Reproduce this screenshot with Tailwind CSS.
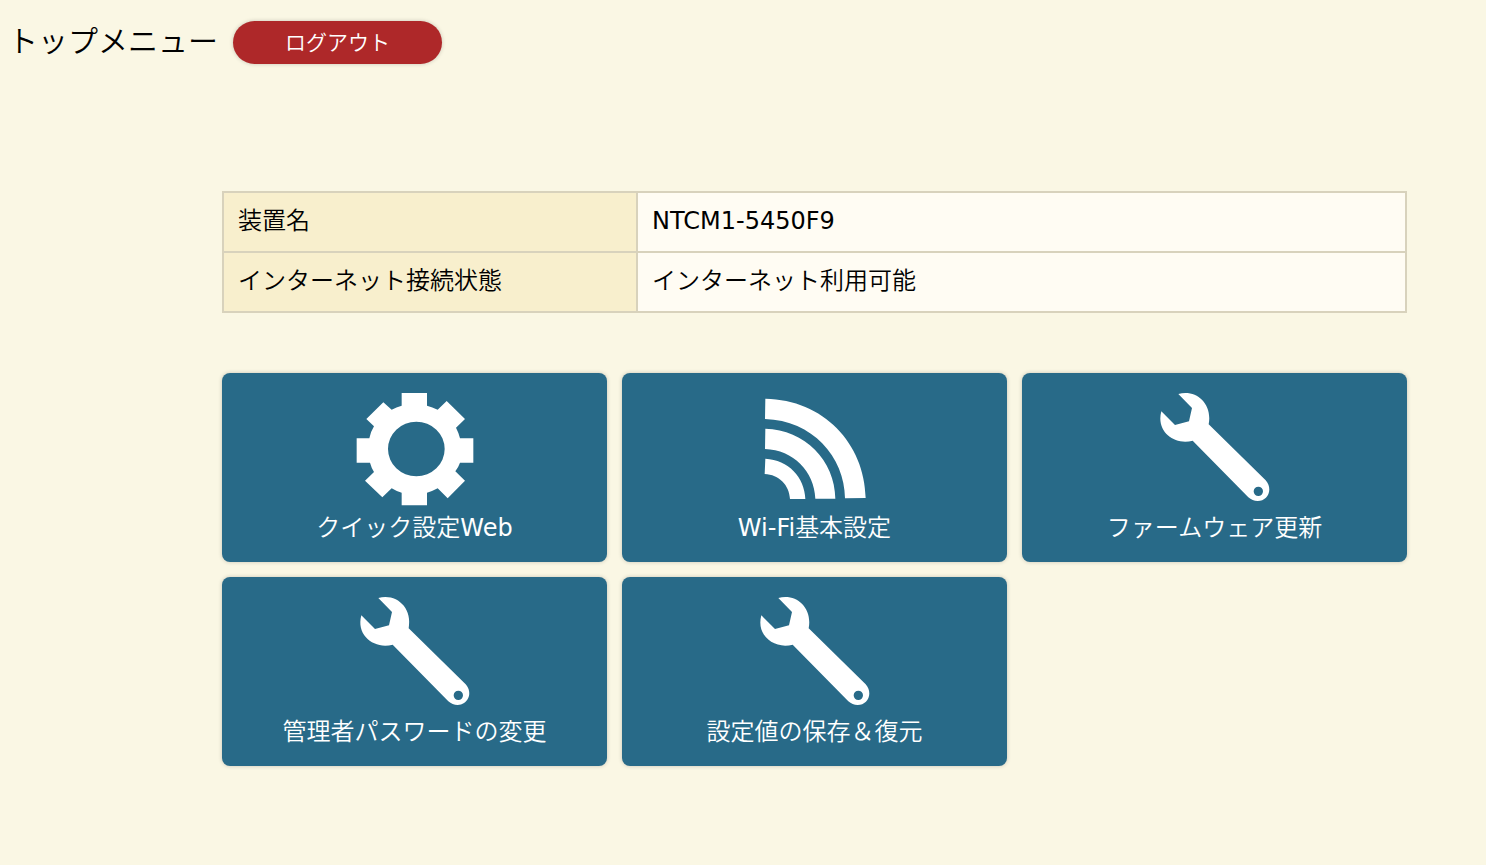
<!DOCTYPE html>
<html lang="ja">
<head>
<meta charset="utf-8">
<meta name="viewport" content="width=device-width, initial-scale=1">
<title>トップメニュー</title>
<script src="https://cdn.jsdelivr.net/npm/@tailwindcss/browser@4"></script>
</head>
<body class="min-h-screen bg-[#faf7e4] font-['DejaVu_Sans','Noto_Sans_CJK_JP',sans-serif] text-2xl font-[350] text-black">
<svg class="hidden" aria-hidden="true">
  <symbol id="wrench" viewBox="42 27 363 360">
    <path fill="currentColor" fill-rule="evenodd" d="M115 42C168 27 218 70 206 133L377 301C401 329 382 363 353 363Q337 363 325 352L158 182C105 197 47 156 64 94L105 135L147 124L156 84ZM355 320a14 14 0 1 0 0 28a14 14 0 1 0 0-28Z"/>
  </symbol>
</svg>
<header class="flex items-start gap-[15px] px-2 pt-[21px]">
  <h1 class="text-[30px] leading-[42px] font-[350]">トップメニュー</h1>
  <button type="button" class="h-[43px] w-[209px] rounded-full bg-[#ae2829] text-[21px] leading-[45px] text-white shadow-[0_0_4px_rgba(0,0,0,0.2)]">ログアウト</button>
</header>
<main class="pt-[127px] pr-[79px] pb-12 pl-[222px]">
  <table class="w-full table-fixed border-collapse">
    <tbody>
      <tr>
        <th scope="row" class="w-[35%] border-2 border-[#d8d2bc] bg-[#f8efcd] px-[14px] pt-[10px] pb-3 text-left leading-9 font-[350]">装置名</th>
        <td class="border-2 border-[#d8d2bc] bg-[#fffcf3] px-[14px] pt-[10px] pb-3 leading-9 font-normal">NTCM1-5450F9</td>
      </tr>
      <tr>
        <th scope="row" class="border-2 border-[#d8d2bc] bg-[#f8efcd] px-[14px] pt-[10px] pb-3 text-left leading-9 font-[350]">インターネット接続状態</th>
        <td class="border-2 border-[#d8d2bc] bg-[#fffcf3] px-[14px] pt-[10px] pb-3 leading-9">インターネット利用可能</td>
      </tr>
    </tbody>
  </table>
  <nav class="mt-[60px] grid grid-cols-3 gap-[15px] text-white">
    <a href="#quick" class="flex flex-col items-center rounded-lg bg-[#286a88] pt-4 pb-[15px] shadow-[0_0_4px_rgba(0,0,0,0.2)]">
      <svg class="h-[120px] w-[121px]" viewBox="42 27 363 360" aria-hidden="true">
        <path fill="currentColor" fill-rule="evenodd" d="M185 39H261V77Q277 81 293 89L320 63L375 117L348 143Q356 158 360 175H400V248H360Q356 260 346 274L375 302L323 355L293 325Q277 334 261 338V376H185V338Q169 334 155 325L127 352L75 302L102 276Q94 263 90 248H50V175H88Q92 155 102 139L79 117L130 67L155 89Q169 81 185 77ZM229 125a85 82 0 1 0 0 164a85 82 0 1 0 0-164Z"/>
      </svg>
      <span class="leading-[38px]">クイック設定<span class="font-normal">Web</span></span>
    </a>
    <a href="#wifi" class="flex flex-col items-center rounded-lg bg-[#286a88] pt-4 pb-[15px] shadow-[0_0_4px_rgba(0,0,0,0.2)]">
      <svg class="h-[120px] w-[121px]" viewBox="42 27 363 360" aria-hidden="true">
        <path fill="currentColor" d="M76 56C250 59 374 190 377 354L315 355C314 230 216 121 75 117ZM76 146C194 149 285 241 286 356H226C223 274 160 210 75 207ZM76 236C145 239 194 292 196 357H150C148 315 117 284 74 282Z"/>
      </svg>
      <span class="leading-[38px]"><span class="font-normal">Wi-Fi</span>基本設定</span>
    </a>
    <a href="#firmware" class="flex flex-col items-center rounded-lg bg-[#286a88] pt-4 pb-[15px] shadow-[0_0_4px_rgba(0,0,0,0.2)]">
      <svg class="h-[120px] w-[121px]" aria-hidden="true"><use href="#wrench"/></svg>
      <span class="leading-[38px]">ファームウェア更新</span>
    </a>
    <a href="#password" class="flex flex-col items-center rounded-lg bg-[#286a88] pt-4 pb-[15px] shadow-[0_0_4px_rgba(0,0,0,0.2)]">
      <svg class="h-[120px] w-[121px]" aria-hidden="true"><use href="#wrench"/></svg>
      <span class="leading-[38px]">管理者パスワードの変更</span>
    </a>
    <a href="#backup" class="flex flex-col items-center rounded-lg bg-[#286a88] pt-4 pb-[15px] shadow-[0_0_4px_rgba(0,0,0,0.2)]">
      <svg class="h-[120px] w-[121px]" aria-hidden="true"><use href="#wrench"/></svg>
      <span class="leading-[38px]">設定値の保存＆復元</span>
    </a>
  </nav>
</main>
</body>
</html>
